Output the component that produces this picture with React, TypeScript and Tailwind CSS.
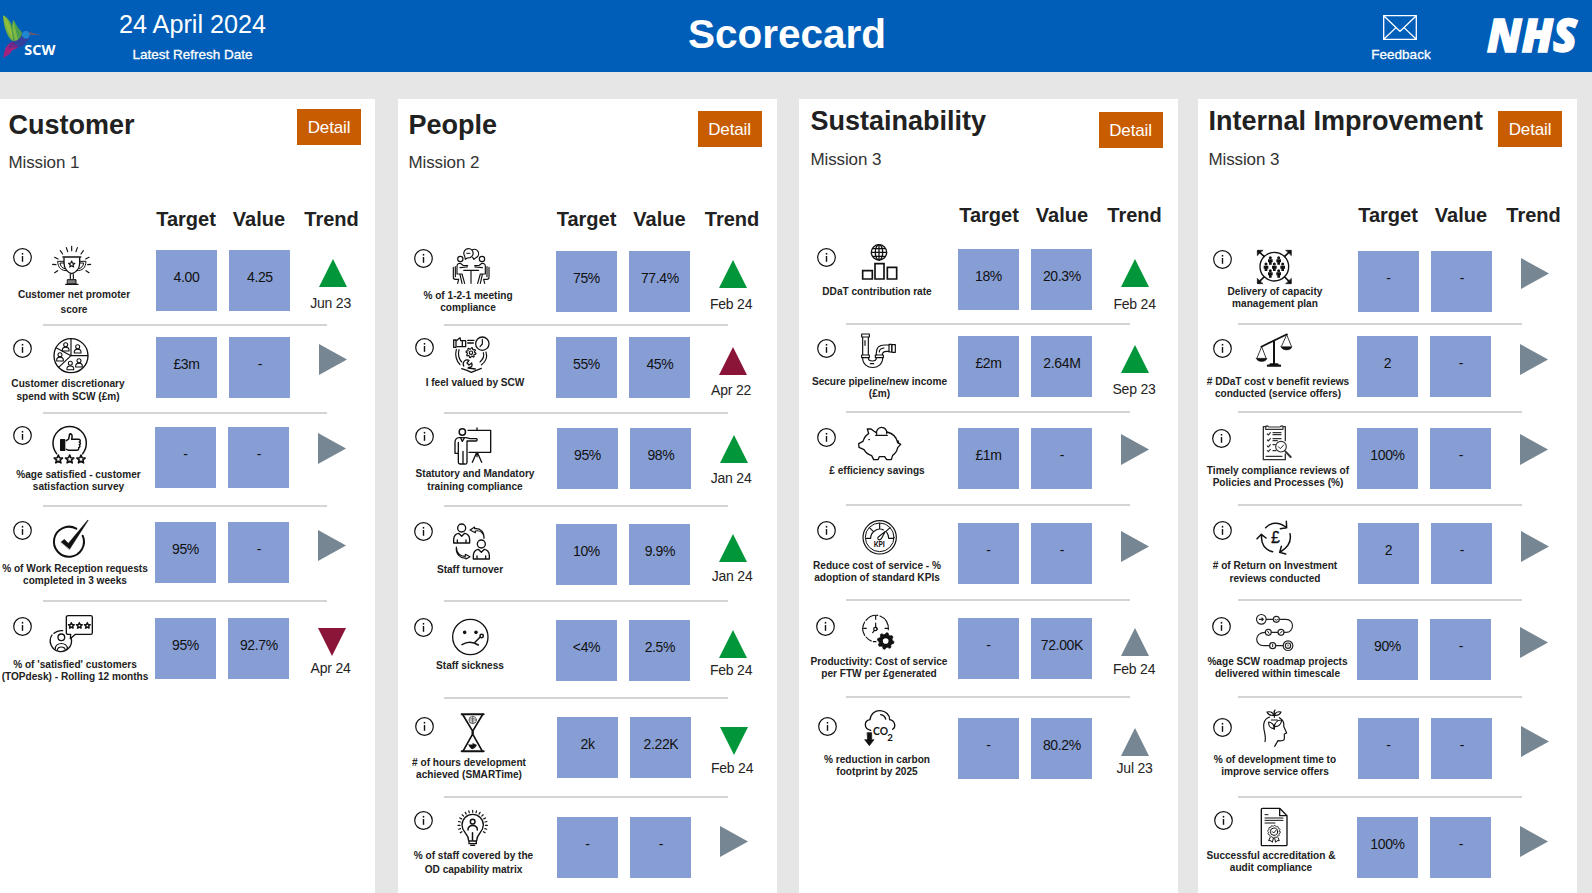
import React from "react";

type Tone = "green" | "red" | "grey";
type Dir = "up" | "down" | "right";

const toneClass: Record<Tone, string> = {
  green: "fill-[#009639]",
  red: "fill-[#8a1538]",
  grey: "fill-[#768692]",
};

/* ---------- drawing helpers ---------- */

function starPoints(x: number, y: number, r: number) {
  return Array.from({ length: 10 }, (_, i) => {
    const a = (Math.PI / 5) * i - Math.PI / 2;
    const q = i % 2 ? r * 0.45 : r;
    return `${(x + q * Math.cos(a)).toFixed(1)},${(y + q * Math.sin(a)).toFixed(1)}`;
  }).join(" ");
}

const Star = ({ x, y, r, w = 4 }: { x: number; y: number; r: number; w?: number }) => (
  <polygon points={starPoints(x, y, r)} strokeWidth={w} />
);

function gearPath(x: number, y: number, r: number, teeth: number, depth: number) {
  const n = teeth * 4;
  return (
    Array.from({ length: n }, (_, i) => {
      const a = ((Math.PI * 2) / n) * (i + 0.5);
      const q = i % 4 < 2 ? r : r - depth;
      return `${i ? "L" : "M"}${(x + q * Math.cos(a)).toFixed(1)} ${(y + q * Math.sin(a)).toFixed(1)}`;
    }).join("") + "Z"
  );
}

function rayPath(x: number, y: number, r1: number, r2: number, from: number, to: number, n: number) {
  return Array.from({ length: n }, (_, i) => {
    const a = ((from + ((to - from) * i) / (n - 1)) * Math.PI) / 180;
    const c = Math.cos(a);
    const s = Math.sin(a);
    return `M${(x + r1 * c).toFixed(1)} ${(y + r1 * s).toFixed(1)}L${(x + r2 * c).toFixed(1)} ${(y + r2 * s).toFixed(1)}`;
  }).join("");
}

const Bust = ({ x, y }: { x: number; y: number }) => (
  <g strokeWidth="3.2">
    <circle cx={x} cy={y - 8} r="6" />
    <path d={`M${x - 10} ${y + 11}V${y + 6}Q${x - 9} ${y} ${x} ${y}Q${x + 9} ${y} ${x + 10} ${y + 6}V${y + 11}Z`} />
  </g>
);

const Art = ({ box, at, children }: { box: string; at: string; children: React.ReactNode }) => (
  <svg
    viewBox={box}
    className={`h-[42px] w-11 shrink-0 overflow-visible ${at}`}
    fill="none"
    stroke="#111"
    strokeWidth="4"
    strokeLinecap="round"
    strokeLinejoin="round"
  >
    {children}
  </svg>
);

const InfoIcon = ({ at }: { at: string }) => (
  <svg viewBox="0 0 19 19" className={`h-[19px] w-[19px] ${at}`} fill="none" stroke="#111">
    <circle cx="9.5" cy="9.5" r="8.8" strokeWidth="1.2" />
    <path d="M9.5 8V13.8" strokeWidth="1.4" />
    <path d="M9.5 4.9V6.6" strokeWidth="1.5" />
  </svg>
);

/* ---------- pictograms ---------- */

const Trophy = ({ at }: { at: string }) => (
  <Art box="147 42 132 126" at={at}>
    <path d="M215 49V62M199 53L203 65M232 53L228 65M181 62L188 72M250 62L243 72M164 82L174 87M267 82L257 87M158 103L168 104M263 104L272 103M164 128L173 122M267 128L258 122" strokeWidth="3.5" />
    <path d="M192 84V100C192 118 205 128 215 131C226 128 239 118 239 100V84" />
    <path d="M189 81H242" strokeWidth="5" />
    <path d="M191 94H173C174 114 184 122 200 122M240 94H258C257 114 247 122 231 122M192 99H180C181 108 186 114 194 116M239 99H251C250 108 245 114 237 116" strokeWidth="3" />
    <Star x={215} y={103} r={10} w={3.5} />
    <path d="M211 132V146M220 132V146" strokeWidth="3.5" />
    <path d="M203 149H228V162H203Z" fill="#111" fillOpacity=".55" strokeWidth="3" />
    <path d="M197 163H234" strokeWidth="4" />
  </Art>
);

const PeoplePie = ({ at }: { at: string }) => (
  <Art box="147 312 132 126" at={at}>
    <circle cx="213" cy="377" r="51" />
    <path d="M213 327V377H263M213 377L176 412M213 377L168 353" strokeWidth="3.5" />
    <Bust x={197} y={352} />
    <Bust x={233} y={358} />
    <Bust x={180} y={382} />
    <Bust x={237} y={400} />
    <Bust x={211} y={408} />
  </Art>
);

const ThumbStars = ({ at }: { at: string }) => (
  <Art box="147 582 132 126" at={at}>
    <path d="M170 671A50 50 0 1 1 248 671" strokeWidth="4.5" />
    <rect x="182" y="629" width="12" height="32" fill="#111" />
    <path d="M199 632L206 627L209 612C216 610 218 616 215 628H236C242 628 242 635 238 636C242 638 242 643 238 644C241 647 240 652 236 653C238 657 234 661 230 661H206L199 658" strokeWidth="4.5" />
    <Star x={175} y={688} r={13} w={5} />
    <Star x={209} y={688} r={13} w={5} />
    <Star x={243} y={688} r={13} w={5} />
  </Art>
);

const CheckRing = ({ at }: { at: string }) => (
  <Art box="147 174 132 126" at={at}>
    <path d="M229 206A45 45 0 1 0 248 227" strokeWidth="6" />
    <path d="M183 246L193 238L205 250L263 180L265 181L209 268Z" fill="#111" strokeWidth="1" />
  </Art>
);

const ReviewUser = ({ at }: { at: string }) => (
  <Art box="147 459 132 126" at={at}>
    <path d="M205 467H272Q277 467 277 472V518Q277 523 272 523H226L211 536L212 523H205Q199 523 199 518V472Q199 467 205 467Z" />
    <Star x={214} y={497} r={9} w={4.5} />
    <Star x={238} y={497} r={9} w={4.5} />
    <Star x={262} y={497} r={9} w={4.5} />
    <path d="M188 512A32 32 0 0 0 162 520M156 525A32 32 0 1 0 214 536" />
    <circle cx="184" cy="532" r="10" />
    <path d="M166 567C164 545 204 545 202 567M172 570C174 558 194 558 196 570" strokeWidth="3.5" />
  </Art>
);

const MeetingSide = () => (
  <g strokeWidth="3.5">
    <circle cx="193" cy="87" r="8" />
    <path d="M183 132V108Q184 99 193 100L201 106L215 107M192 113L214 111M183 132H198L206 160M172 112V142Q172 148 178 148H188M192 134L198 160M188 148L185 160M178 110V140" />
  </g>
);

const Meeting = ({ at }: { at: string }) => (
  <Art box="162 48 132 126" at={at}>
    <path d="M206 78A14 14 0 1 1 222 83L214 84L208 88Z" strokeWidth="3.5" />
    <path d="M229 59A13 13 0 1 1 240 83L234 88L230 82" strokeWidth="3.5" />
    <path d="M212 70H222" strokeWidth="3" />
    <MeetingSide />
    <g transform="translate(451 0) scale(-1 1)">
      <MeetingSide />
    </g>
    <path d="M203 121H248M225 121V160" strokeWidth="3.5" />
  </Art>
);

const ValuedCycle = ({ at }: { at: string }) => (
  <Art box="162 312 132 126" at={at}>
    <path d="M173 330H180V352H173ZM180 333L192 323L194 332H209V350H184M199 332V350M215 331H234M215 339H232" strokeWidth="3.8" />
    <circle cx="259" cy="341" r="20" strokeWidth="3.8" />
    <path d="M259 328V342L252 350" strokeWidth="3.5" />
    <path d={gearPath(225, 368, 15, 8, 4)} strokeWidth="3.5" />
    <circle cx="225" cy="368" r="5" strokeWidth="3.5" />
    <path d="M181 358C176 378 182 393 192 404M189 359C185 375 189 387 197 396M270 366C275 382 268 396 256 405M262 368C266 380 261 388 252 396" strokeWidth="3.5" />
    <path d="M203 408C198 396 208 387 219 391L213 399L219 405L227 399C231 408 226 413 218 412M197 416L213 421L226 427L256 415M216 414L238 417" strokeWidth="3.8" />
  </Art>
);

const Presenter = ({ at }: { at: string }) => (
  <Art box="162 585 132 126" at={at}>
    <circle cx="199" cy="606" r="9.5" strokeWidth="4.5" />
    <path d="M216 601H284V667H219M243 594V600M243 668V680M241 670L229 697M245 670L257 697" />
    <path d="M189 623H210L222 626H241Q246 629 241 633H213V698Q212 703 206 702H201V664M200 702H192Q187 702 187 697V670M187 637V670H177V636Q178 624 189 623M194 624L199 634L205 624" />
  </Art>
);

const TurnoverPerson = ({ x, y }: { x: number; y: number }) => (
  <g transform={`translate(${x} ${y})`}>
    <circle cx="0" cy="0" r="12" />
    <path d="M-24 45V34Q-23 18 -9 16L0 25L9 16Q23 18 24 34V45ZM-13 45V36M13 45V36" />
  </g>
);

const Turnover = ({ at }: { at: string }) => (
  <Art box="162 183 132 126" at={at}>
    <TurnoverPerson x={197} y={204} />
    <TurnoverPerson x={256} y={252} />
    <path d="M264 235C264 218 252 210 238 213V218L222 210L236 201V206C254 204 265 216 264 235Z" strokeWidth="3.5" />
    <path d="M181 261C181 280 194 290 208 289V283L222 290L210 297V294C192 296 179 282 181 261Z" strokeWidth="3.5" />
  </Art>
);

const SickFace = ({ at }: { at: string }) => (
  <Art box="162 468 132 126" at={at}>
    <circle cx="223" cy="531" r="53" />
    <circle cx="206" cy="517" r="3.5" fill="#111" />
    <circle cx="240" cy="517" r="3.5" fill="#111" />
    <path d="M198 554Q222 539 247 555M237 547L252 532" strokeWidth="4.5" />
    <circle cx="257" cy="528" r="5" strokeWidth="4.5" />
  </Art>
);

const Hourglass = ({ at }: { at: string }) => (
  <Art box="162 63 132 126" at={at}>
    <path d="M197 73H263M197 184H263" strokeWidth="6" />
    <path d="M201 75L229 122V134L202 182M259 75L231 122V134L258 182" strokeWidth="5" />
    <g strokeWidth="2.2" stroke="#444">
      <circle cx="230" cy="90" r="11" />
      <path d="M219 90H241M230 79V101M222 84Q230 88 238 84M222 97Q230 93 238 97" />
    </g>
    <path d="M218 164H230V160L242 165L238 172L230 177Q222 176 218 164Z" fill="#111" strokeWidth="1" />
  </Art>
);

const StaffBulb = ({ at }: { at: string }) => (
  <Art box="162 354 132 126" at={at}>
    <path d="M218 452C218 430 198 428 198 405A32 32 0 0 1 262 405C262 428 242 430 242 452" />
    <path d="M219 453H241V461H219ZM224 466H236" />
    <circle cx="230" cy="395" r="7" strokeWidth="4.5" />
    <path d="M216 420C214 402 246 402 244 420M229.500 428V450" strokeWidth="4.5" />
    <path d={rayPath(230, 405, 38, 44, -212, 32, 17)} strokeWidth="3.5" />
  </Art>
);

const GlobeBars = ({ at }: { at: string }) => (
  <Art box="183 36 132 126" at={at}>
    <circle cx="249" cy="67" r="23" />
    <ellipse cx="249" cy="67" rx="11" ry="23" />
    <path d="M249 44V90M227 67H271M231 56H267M231 79H267" />
    <path d="M200 122H229V147H200ZM237 101H264V147H237ZM274 112H302V147H274Z" strokeWidth="5" strokeLinejoin="miter" />
  </Art>
);

const Pipe = ({ at }: { at: string }) => (
  <Art box="183 303 132 126" at={at}>
    <g strokeWidth="3.5">
      <path d="M197 312H220V321H197ZM200 321V374M217 321V374M197 375H220V383H197ZM200 384C200 422 260 422 260 384M217 384C217 396 241 396 241 384M238 375H262V383H238Z" />
      <path d="M241 375V368C241 352 252 345 266 345H280M259 374C259 366 264 364 272 364H280M279 343H287V366H279ZM288 344H298V367H288Z" />
      <path d="M207 332V346M250 366C250 360 256 355 264 354M223 401H233" />
    </g>
  </Art>
);

const PiggyBank = ({ at }: { at: string }) => (
  <Art box="183 582 132 126" at={at}>
    <path d="M241 608L233 603L225 597H214L218 611C208 617 204 624 201 634L188 641L189 652L204 659C209 668 217 674 227 677L233 689H246L250 680H266L272 689H286L290 676C298 671 303 664 305 653L314 643L305 638C302 622 290 610 273 606" />
    <path d="M239 616H274M242 612A15.500 15.500 0 1 1 272 611" />
    <circle cx="219" cy="629" r="1.500" strokeWidth="2" />
    <path d="M306 632L308 640" />
  </Art>
);

const KpiDial = ({ at }: { at: string }) => (
  <Art box="183 174 132 126" at={at}>
    <circle cx="251" cy="232" r="50" strokeWidth="3.500" />
    <circle cx="251" cy="232" r="43" strokeWidth="3" />
    <path d="M251 190V206M209 235H224M293 235H278M220 203L232 214M282 203L270 214M224 235C224 223 230 216 239 211C246 207 256 206 262 210M278 235C278 228 276 222 272 217M247 231L268 214L256 236Q250 243 246 237Q244 233 247 231Z" strokeWidth="3.500" />
    <text x="250" y="262" textAnchor="middle" textLength="33" lengthAdjust="spacingAndGlyphs" fontSize="20" fontWeight="900" fontFamily="Lato, sans-serif" fill="#111" stroke="none">KPI</text>
  </Art>
);

const ClockGear = ({ at }: { at: string }) => (
  <Art box="183 456 132 126" at={at}>
    <path d="M277 509A39 39 0 0 0 252 468M245 466A39 39 0 0 0 210 481M206 486A39 39 0 0 0 206 526M210 531A39 39 0 0 0 226 543M232 545H240" strokeWidth="3.500" />
    <path d="M239 468V478M203 505H211M267 505H276M239 489V501M235 512L230 518M241 502L244 508" strokeWidth="3.500" />
    <circle cx="238" cy="507" r="5" strokeWidth="3.500" />
    <path d={gearPath(269, 543, 25, 8, 5)} fill="#111" strokeWidth="2" />
    <circle cx="269" cy="543" r="8.500" fill="#fff" stroke="none" />
  </Art>
);

const CarbonCloud = ({ at }: { at: string }) => (
  <Art box="183 741 132 126" at={at}>
    <path d="M224 811C202 805 204 782 222 779C224 760 238 751 253 752C270 753 281 765 281 779C297 782 301 800 290 808M254 764Q266 766 269 777" />
    <path d="M214 818H227V839H234L220 857L206 839H214Z" fill="#111" strokeWidth="2" />
    <text x="231" y="825" textLength="45" lengthAdjust="spacingAndGlyphs" fontSize="34" fontWeight="700" fontFamily="Lato, sans-serif" fill="#111" stroke="none">CO</text>
    <text x="274" y="842" fontSize="29" fontWeight="700" fontFamily="Lato, sans-serif" fill="#111" stroke="none">2</text>
  </Art>
);

const crowd = [[235, 88], [260, 88], [222, 107], [247, 107], [272, 107], [235, 127], [260, 127]];

const Capacity = ({ at }: { at: string }) => (
  <Art box="180 48 132 126" at={at}>
    <circle cx="247" cy="110" r="43" />
    <path d="M216 79L199 63M278 79L295 63M216 141L199 158M278 141L295 158" strokeWidth="5" />
    <path d="M196 76V61H212ZM298 76V61H282ZM196 146V161H212ZM298 146V161H282Z" fill="#111" strokeWidth="2" />
    {crowd.map(([x, y]) => (
      <g key={`${x}-${y}`} fill="#111" stroke="none">
        <circle cx={x} cy={y - 5} r="4.500" />
        <path d={`M${x - 7} ${y}H${x + 7}V${y + 9}H${x + 4}V${y + 16}H${x - 4}V${y + 9}H${x - 7}Z`} />
      </g>
    ))}
  </Art>
);

const Scales = ({ at }: { at: string }) => (
  <Art box="180 303 132 126" at={at}>
    <path d="M208 350L285 313" strokeWidth="5" />
    <path d="M246 334V402" strokeWidth="6" />
    <path d="M228 407H264M236 403H256" strokeWidth="7" />
    <path d="M209 350L195 384M209 350L222 384M284 314L269 348M284 314L298 348" strokeWidth="2.500" />
    <path d="M193 385H225C222 398 196 398 193 385ZM267 350H300C297 363 270 363 267 350Z" fill="#111" strokeWidth="1.500" />
  </Art>
);

const AuditClipboard = ({ at }: { at: string }) => (
  <Art box="180 582 132 126" at={at}>
    <g stroke="#333">
      <path d="M223 590H214V689H280V672M280 632V590H271" />
      <path d="M221 589V598H273V589Q268 586 264 591H230Q226 586 221 589Z" strokeWidth="3.500" />
      <path d="M226 612L229 615L235 608M226 630L229 633L235 626M226 648L229 651L235 644M226 662L229 665L235 658M243 608H267M243 614H267M243 626H267M243 632H256M243 644H250M243 662H252M222 679H270" strokeWidth="3.500" />
      <circle cx="267" cy="650" r="16" fill="#fff" strokeWidth="3.500" />
      <path d="M259 650L265 656L275 645" strokeWidth="3" />
      <path d="M280 664L296 681" strokeWidth="6" />
    </g>
  </Art>
);

const ReturnCycle = ({ at }: { at: string }) => (
  <Art box="180 174 132 126" at={at}>
    <path d="M221 203C238 186 262 186 281 201M283 184L284 203L265 206M294 221C299 244 288 262 265 276M268 259L263 277L281 282M242 275C218 270 206 250 209 225M195 236L208 223L222 234" strokeWidth="4.500" />
    <text x="250" y="249" textAnchor="middle" fontSize="48" fontFamily="Liberation Sans, Arial, sans-serif" fill="#111" strokeWidth="1">£</text>
  </Art>
);

const Roadmap = ({ at }: { at: string }) => (
  <Art box="180 456 132 126" at={at}>
    <g stroke="#222" strokeWidth="3.500">
      <circle cx="208" cy="478" r="14.500" />
      <path d="M202 478H213M210 474L214 478L210 482" />
      <path d="M223 478H244M262 478H282C308 478 308 517 282 517H276M258 517H238M220 517C186 517 186 557 216 557H233M251 557H273" />
      <circle cx="253" cy="478" r="9" />
      <circle cx="267" cy="517" r="9" />
      <circle cx="229" cy="517" r="9" />
      <circle cx="242" cy="557" r="9" />
      <circle cx="288" cy="557" r="14.500" />
      <circle cx="288" cy="557" r="8" />
      <path d="M249 479Q253 483 257 479M264 520L270 514M227 514L231 520M242 553V560M288 555V558" strokeWidth="3" />
    </g>
  </Art>
);

const GrowthMind = ({ at }: { at: string }) => (
  <Art box="180 51 132 126" at={at}>
    <path d="M219 155C224 132 211 120 216 99C218 90 224 84 233 81M262 83C273 89 277 98 275 109L284 129L277 132V146Q277 154 258 152L248 169" strokeWidth="3.500" />
    <path d="M247 64V82M247 118V104" strokeWidth="3.500" />
    <path d="M246 76C236 77 228 73 225 66C235 64 243 67 246 76ZM248 76C257 77 264 73 267 66C258 64 250 67 248 76ZM246 66L249 60M246 116C236 115 229 107 230 96C241 98 247 105 246 116ZM247 110C249 97 258 89 269 90C268 103 259 111 247 110ZM238 90H256" strokeWidth="3.500" />
  </Art>
);

const Certificate = ({ at }: { at: string }) => (
  <Art box="180 348 132 126" at={at}>
    <path d="M211 355H263L285 377V464Q285 467 282 467H211Q208 467 208 464V358Q208 355 211 355ZM263 356V377H284" />
    <path d="M219 374H228M219 384H273M219 391H273M219 399H249" strokeWidth="3" />
    <path d={gearPath(246, 425, 19, 12, 2.5)} strokeWidth="2.500" />
    <circle cx="246" cy="425" r="11" strokeWidth="3" />
    <path d="M241 425L245 429L252 421M234 443L230 452L237 452L241 457L244 445M258 443L262 452L255 452L251 457L248 445" strokeWidth="3" />
  </Art>
);

/* ---------- scorecard pieces ---------- */

const Triangle = ({ dir, tone }: { dir: Dir; tone: Tone }) =>
  dir === "right" ? (
    <svg viewBox="0 0 28 31" className={`h-[31px] w-7 shrink-0 ${toneClass[tone]}`}>
      <path d="M0 0L28 15.500L0 31Z" />
    </svg>
  ) : (
    <svg viewBox="0 0 28 28" className={`h-7 w-7 shrink-0 ${toneClass[tone]}`}>
      <path d={dir === "up" ? "M14 0L28 28H0Z" : "M0 0H28L14 28Z"} />
    </svg>
  );

const Tile = ({ children }: { children: string }) => (
  <div className="flex h-[61px] w-[61px] items-center justify-center bg-[#879ed4] pb-[7px] text-[14px] leading-4 tracking-[-0.35px] text-[#111]">
    {children}
  </div>
);

interface RowProps {
  size: string;
  left: string;
  gutter: string;
  info: string;
  head: string;
  art: React.ReactNode;
  label: string;
  lines: string[];
  tiles: string;
  target: string;
  value: string;
  dir?: Dir;
  tone?: Tone;
  trend: string;
  date?: string;
  dateAt?: string;
}

const Row = ({ size, left, gutter, info, head, art, label, lines, tiles, target, value, dir = "right", tone = "grey", trend, date, dateAt = "" }: RowProps) => (
  <div className={`flex items-start ${size}`}>
    <div className={`shrink-0 ${left}`}>
      <div className={`flex items-start ${head}`}>
        <div className={`shrink-0 ${gutter}`}>
          <InfoIcon at={info} />
        </div>
        {art}
      </div>
      <p className={`w-[150px] pt-[0.6px] text-center text-[10.1px] font-bold whitespace-nowrap text-[#222] ${label}`}>
        {lines.map((l) => (
          <span key={l} className="block">{l}</span>
        ))}
      </p>
    </div>
    <div className={`flex shrink-0 gap-[12.4px] ${tiles}`}>
      <Tile>{target}</Tile>
      <Tile>{value}</Tile>
    </div>
    <div className={`ml-[28.2px] flex w-7 shrink-0 flex-col items-center ${trend}`}>
      <Triangle dir={dir} tone={tone} />
      {date && <span className={`pt-px text-[14px] leading-4 tracking-[-0.2px] whitespace-nowrap text-[#252423] ${dateAt}`}>{date}</span>}
    </div>
  </div>
);

const Rule = ({ at }: { at: string }) => <div className={`h-[2px] w-[284px] bg-[#d4d4d4] ${at}`} />;

interface PanelProps {
  title: string;
  mission: string;
  width: string;
  pad: string;
  titleAt: string;
  missionAt: string;
  button: string;
  heads: string;
  rule: string;
  gutter: string;
  rows: Omit<RowProps, "gutter">[];
}

const Panel = ({ title, mission, width, pad, titleAt, missionAt, button, heads, rule, gutter, rows }: PanelProps) => (
  <section className={`h-[794px] shrink-0 overflow-hidden bg-white ${width}`}>
    <div className="h-[133px]">
      <div className={`flex h-[102px] items-start justify-between ${pad}`}>
        <div>
          <h2 className={`text-[27px] leading-8 font-bold whitespace-nowrap text-[#212121] ${titleAt}`}>{title}</h2>
          <p className={`text-[17px] leading-5 tracking-[-0.12px] text-[#333] ${missionAt}`}>{mission}</p>
        </div>
        <button className={`h-9 w-16 shrink-0 bg-[#c85c00] pt-px text-[17px] tracking-[-0.15px] text-white ${button}`}>Detail</button>
      </div>
      <div className={`flex gap-3 text-[20px] leading-6 font-bold text-[#212121] ${heads}`}>
        <span className="flex w-[61px] justify-center">Target</span>
        <span className="flex w-[61px] justify-center">Value</span>
        <span className="ml-4 flex w-7 justify-center">Trend</span>
      </div>
    </div>
    {rows.map((r, i) => (
      <React.Fragment key={r.lines[0]}>
        {i > 0 && <Rule at={rule} />}
        <Row gutter={gutter} {...r} />
      </React.Fragment>
    ))}
  </section>
);

const panels: PanelProps[] = [
  {
    title: "Customer", mission: "Mission 1", width: "w-[375px]", pad: "pl-[8.500px] pr-[14px]",
    titleAt: "mt-[9.500px]", missionAt: "mt-[12px]", button: "mt-[10px]", heads: "pl-[155.500px] pt-[6px]",
    rule: "ml-[42.500px]", gutter: "w-[49px]",
    rows: [
      { size: "h-[92px]", left: "w-[156px]", info: "mt-4 ml-[13px]", head: "h-[54px]", art: <Trophy at="mt-3" />, label: "-ml-px leading-[15px]", lines: ["Customer net promoter", "score"], tiles: "mt-[18px]", target: "4.00", value: "4.25", dir: "up", tone: "green", trend: "mt-[26.700px]", date: "Jun 23", dateAt: "mt-[7px] mr-[4px]" },
      { size: "h-[86px]", left: "w-[156px]", info: "mt-[12.500px] ml-[13px]", head: "h-[50px]", art: <PeoplePie at="mt-2" />, label: "-ml-[7px] leading-[13.500px]", lines: ["Customer discretionary", "spend with SCW (£m)"], tiles: "mt-[11px]", target: "£3m", value: "-", trend: "mt-[17.700px]" },
      { size: "h-[91px]", left: "w-[155px]", info: "mt-3 ml-[12.500px]", head: "h-[54px]", art: <ThumbStars at="mt-[10px]" />, label: "ml-[3.500px] leading-[12.500px]", lines: ["%age satisfied - customer", "satisfaction survey"], tiles: "mt-[13px]", target: "-", value: "-", trend: "mt-[18.700px]" },
      { size: "h-[93px]", left: "w-[155px]", info: "mt-[14px] ml-[13px]", head: "h-[55px]", art: <CheckRing at="mt-[11px]" />, label: "ml-0 leading-[12.700px]", lines: ["% of Work Reception requests", "completed in 3 weeks"], tiles: "mt-[15px]", target: "95%", value: "-", trend: "mt-[22.700px]" },
      { size: "h-[95px]", left: "w-[155px]", info: "mt-[15px] ml-[13px]", head: "h-[56px]", art: <ReviewUser at="mt-[11px]" />, label: "ml-0 leading-[12.700px]", lines: ["% of 'satisfied' customers", "(TOPdesk) - Rolling 12 months"], tiles: "mt-4", target: "95%", value: "92.7%", dir: "down", tone: "red", trend: "mt-[25.700px]", date: "Apr 24", dateAt: "mt-[3.500px] mr-[2px]" },
    ],
  },
  {
    title: "People", mission: "Mission 2", width: "ml-[23px] w-[379px]", pad: "pl-[10.500px] pr-[15.500px]",
    titleAt: "mt-[9.500px]", missionAt: "mt-[12px]", button: "mt-[12px]", heads: "pl-[158px] pt-[6px]",
    rule: "ml-[46px]", gutter: "w-[52px]",
    rows: [
      { size: "h-[92px]", left: "w-[158px]", info: "mt-[17px] ml-[16px]", head: "h-[57px]", art: <Meeting at="mt-[14px]" />, label: "-ml-[5px] leading-[12.700px]", lines: ["% of 1-2-1 meeting", "compliance"], tiles: "mt-[19px]", target: "75%", value: "77.4%", dir: "up", tone: "green", trend: "mt-7", date: "Feb 24", dateAt: "mt-[7px] mr-[3px]" },
      { size: "h-[86px]", left: "w-[158px]", info: "mt-3 ml-[17px]", head: "h-[50px]", art: <ValuedCycle at="mt-2" />, label: "ml-[2px] leading-[12.700px]", lines: ["I feel valued by SCW"], tiles: "mt-[11px]", target: "55%", value: "45%", dir: "up", tone: "red", trend: "mt-[20.700px]", date: "Apr 22", dateAt: "mt-[6px] mr-[3px]" },
      { size: "h-[91px]", left: "w-[159px]", info: "mt-[13px] ml-[17px]", head: "h-[52px]", art: <Presenter at="mt-[11px]" />, label: "ml-[2px] leading-[13.600px]", lines: ["Statutory and Mandatory", "training compliance"], tiles: "mt-[14px]", target: "95%", value: "98%", dir: "up", tone: "green", trend: "mt-[21.300px]", date: "Jan 24", dateAt: "mt-[6px] mr-[5px]" },
      { size: "h-[93px]", left: "w-[158px]", info: "mt-[15px] ml-[16px]", head: "h-[56px]", art: <Turnover at="mt-[14px]" />, label: "-ml-[3px] leading-[12.700px]", lines: ["Staff turnover"], tiles: "mt-[17px]", target: "10%", value: "9.9%", dir: "up", tone: "green", trend: "mt-[27px]", date: "Jan 24", dateAt: "mt-[5px] mr-px" },
      { size: "h-[95px]", left: "w-[158px]", info: "mt-4 ml-[16px]", head: "h-[57px]", art: <SickFace at="mt-[14px]" />, label: "-ml-[3px] leading-[12.700px]", lines: ["Staff sickness"], tiles: "mt-[18px]", target: "<4%", value: "2.5%", dir: "up", tone: "green", trend: "mt-7", date: "Feb 24", dateAt: "mt-[3px] mr-[3px]" },
      { size: "h-[97px]", left: "w-[159px]", info: "mt-[18px] ml-[17px]", head: "h-[57px]", art: <Hourglass at="mt-3" />, label: "-ml-[4px] leading-[12.700px]", lines: ["# of hours development", "achieved (SMARTime)"], tiles: "mt-[18px]", target: "2k", value: "2.22K", dir: "down", tone: "green", trend: "mt-7", date: "Feb 24", dateAt: "mt-[4px] mr-[3px]" },
      { size: "h-[94px]", left: "w-[159px]", info: "mt-[13px] ml-[15.500px]", head: "h-[50.500px]", art: <StaffBulb at="mt-[10px]" />, label: "ml-[0.500px] leading-[13.600px]", lines: ["% of staff covered by the", "OD capability matrix"], tiles: "mt-[19px]", target: "-", value: "-", trend: "mt-[27.700px]" },
    ],
  },
  {
    title: "Sustainability", mission: "Mission 3", width: "ml-[22px] w-[379px]", pad: "pl-[11.500px] pr-[15.500px]",
    titleAt: "mt-[6px]", missionAt: "mt-[12.500px]", button: "mt-[13px]", heads: "pl-[159.500px] pt-[2px]",
    rule: "ml-[46.500px]", gutter: "w-[58px]",
    rows: [
      { size: "h-[91px]", left: "w-[159px]", info: "mt-4 ml-[18px]", head: "h-[53px]", art: <GlobeBars at="mt-[10px]" />, label: "ml-[3px] leading-[12.700px]", lines: ["DDaT contribution rate"], tiles: "mt-[17px]", target: "18%", value: "20.3%", dir: "up", tone: "green", trend: "mt-[26.700px]", date: "Feb 24", dateAt: "mt-[8px]" },
      { size: "h-[86px]", left: "w-[159px]", info: "mt-[13.500px] ml-[18px]", head: "h-[50.500px]", art: <Pipe at="mt-[6px]" />, label: "ml-[5.500px] leading-[11.700px]", lines: ["Secure pipeline/new income", "(£m)"], tiles: "mt-[11px]", target: "£2m", value: "2.64M", dir: "up", tone: "green", trend: "mt-5", date: "Sep 23", dateAt: "mt-[7px] mr-px" },
      { size: "h-[91px]", left: "w-[159px]", info: "mt-[14.500px] ml-[18px]", head: "h-[51px]", art: <PiggyBank at="mt-[11px]" />, label: "ml-[3px] leading-[12.700px]", lines: ["£ efficiency savings"], tiles: "mt-[15px]", target: "£1m", value: "-", trend: "mt-[21px]" },
      { size: "h-[93px]", left: "w-[159px]", info: "mt-[15px] ml-[18px]", head: "h-[53px]", art: <KpiDial at="mt-3" />, label: "ml-[3px] leading-[12.700px]", lines: ["Reduce cost of service - %", "adoption of standard KPIs"], tiles: "mt-[17px]", target: "-", value: "-", trend: "mt-[24.700px]" },
      { size: "h-[95px]", left: "w-[159px]", info: "mt-[15.500px] ml-[17px]", head: "h-[54px]", art: <ClockGear at="mt-[11px]" />, label: "ml-[5px] leading-[12.500px]", lines: ["Productivity: Cost of service", "per FTW per £generated"], tiles: "mt-[17px]", target: "-", value: "72.00K", dir: "up", tone: "grey", trend: "mt-[27.300px]", date: "Feb 24", dateAt: "mt-[4px] mr-px" },
      { size: "h-[98px]", left: "w-[159px]", info: "mt-[19px] ml-[18.500px]", head: "h-[55px]", art: <CarbonCloud at="mt-[9px]" />, label: "ml-[3px] leading-[12.700px]", lines: ["% reduction in carbon", "footprint by 2025"], tiles: "mt-5", target: "-", value: "80.2%", dir: "up", tone: "grey", trend: "mt-[29.700px]", date: "Jul 23", dateAt: "mt-[3px]" },
    ],
  },
  {
    title: "Internal Improvement", mission: "Mission 3", width: "ml-[20px] w-[379px]", pad: "pl-[10.500px] pr-[15px]",
    titleAt: "mt-[6px]", missionAt: "mt-[12.500px]", button: "mt-[12px]", heads: "pl-[159.500px] pt-[2px]",
    rule: "ml-[39.500px]", gutter: "w-[54px]",
    rows: [
      { size: "h-[91px]", left: "w-[160px]", info: "mt-[17.500px] ml-[14.500px]", head: "h-[53px]", art: <Capacity at="mt-[14px]" />, label: "ml-[2px] leading-[12.300px]", lines: ["Delivery of capacity", "management plan"], tiles: "mt-[19px]", target: "-", value: "-", trend: "mt-[26px]" },
      { size: "h-[86px]", left: "w-[159px]", info: "mt-[13.500px] ml-[14.500px]", head: "h-[50.500px]", art: <Scales at="mt-[6px]" />, label: "ml-[5px] leading-[11.700px]", lines: ["# DDaT cost v benefit reviews", "conducted (service offers)"], tiles: "mt-[11px]", target: "2", value: "-", trend: "mt-[19px]" },
      { size: "h-[91px]", left: "w-[159px]", info: "mt-4 ml-[13.500px]", head: "h-[51.500px]", art: <AuditClipboard at="mt-[11px]" />, label: "ml-[5px] leading-[11.700px]", lines: ["Timely compliance reviews of", "Policies and Processes (%)"], tiles: "mt-[15px]", target: "100%", value: "-", trend: "mt-[21px]" },
      { size: "h-[93px]", left: "w-[160px]", info: "mt-[15px] ml-[14.500px]", head: "h-[52px]", art: <ReturnCycle at="mt-3" />, label: "ml-[2px] leading-[13.600px]", lines: ["# of Return on Investment", "reviews conducted"], tiles: "mt-[17px]", target: "2", value: "-", trend: "mt-[25px]" },
      { size: "h-[95px]", left: "w-[159px]", info: "mt-4 ml-[13.500px]", head: "h-[54px]", art: <Roadmap at="mt-[11px]" />, label: "ml-[4.500px] leading-[12.500px]", lines: ["%age SCW roadmap projects", "delivered within timescale"], tiles: "mt-[18px]", target: "90%", value: "-", trend: "mt-[26px]" },
      { size: "h-[98px]", left: "w-[160px]", info: "mt-[19.500px] ml-[14.500px]", head: "h-[55px]", art: <GrowthMind at="mt-[9px]" />, label: "ml-[2px] leading-[12.500px]", lines: ["% of development time to", "improve service offers"], tiles: "mt-5", target: "-", value: "-", trend: "mt-7" },
      { size: "h-[94px]", left: "w-[159px]", info: "mt-[13px] ml-[15.500px]", head: "h-[51px]", art: <Certificate at="mt-2" />, label: "-ml-[2px] leading-[12.700px]", lines: ["Successful accreditation &", "audit compliance"], tiles: "mt-[19px]", target: "100%", value: "-", trend: "mt-[27.700px]" },
    ],
  },
];

const ScwLogo = () => (
  <svg viewBox="0 40 174 141" className="mt-[13px] h-[47px] w-[58px] shrink-0">
    <path d="M9 47C20 52 30 62 35 78L40 126C24 116 11 88 9 47Z" fill="#6fae45" />
    <path d="M9 47C24 60 32 80 42 124C28 108 16 80 9 47Z" fill="#93bf3c" />
    <path d="M40 60C46 68 50 78 54 84L66 98L64 124L40 126L34 80Z" fill="#4a9c4e" />
    <path d="M40 60C44 80 50 100 54 124L46 126L38 90Z" fill="#7cb843" />
    <path d="M36 126C52 124 64 116 68 98C72 92 88 90 91 100C90 120 74 142 52 144C44 142 36 136 36 126Z" fill="#3340a0" />
    <path d="M66 108C64 96 76 91 84 95C92 100 91 110 84 116C76 118 70 116 66 108Z" fill="#1f86cf" />
    <path d="M88 97L122 107L88 105Z" fill="#6d5a70" />
    <path d="M36 126L54 142C46 152 38 146 30 162L24 166L10 175C12 154 18 134 36 126Z" fill="#a3237f" />
    <path d="M36 126L54 142C44 146 34 140 26 148C26 138 30 130 36 126Z" fill="#6b2a8c" />
    <text x="73" y="167" textLength="93" lengthAdjust="spacingAndGlyphs" fontFamily="Open Sans, sans-serif" fontWeight="700" fontSize="43" fill="#fff">SCW</text>
  </svg>
);

export default function App() {
  return (
    <div className="h-[893px] w-[1592px] overflow-hidden bg-[#e6e6e6] font-['Liberation_Sans',Arial,sans-serif]">
      <header className="flex h-[72px] items-start bg-[#005eb8] text-white">
        <ScwLogo />
        <div className="ml-[56px] flex w-[157px] shrink-0 flex-col items-center whitespace-nowrap">
          <span className="mt-[10px] text-[25.2px] leading-7">24 April 2024</span>
          <span className="mt-[9px] text-[13.5px] leading-4 [-webkit-text-stroke:0.3px_white]">Latest Refresh Date</span>
        </div>
        <h1 className="ml-[415px] w-[202px] shrink-0 pt-[11px] text-center text-[40.5px] leading-[46px] font-bold">Scorecard</h1>
        <div className="ml-[473px] flex w-[80px] shrink-0 flex-col items-center">
          <svg viewBox="0 0 34 25" className="mt-[15px] mr-[3px] h-[25px] w-[34px]" fill="none" stroke="#fff" strokeWidth="1.300">
            <path d="M0.700 0.700H33.300V24.300H0.700ZM0.700 0.700L14 13.500L17 16.300L20 13.500L33.300 0.700M0.700 24.300L13 12.600M33.300 24.300L21 12.600" />
          </svg>
          <span className="mt-[7px] text-[13.500px] leading-4 [-webkit-text-stroke:0.3px_white]">Feedback</span>
        </div>
        <svg viewBox="0 -16 104 72" className="ml-[45px] h-[72px] w-[104px] shrink-0 overflow-visible">
          <text x="1" y="35.500" textLength="90" lengthAdjust="spacingAndGlyphs" fontFamily="Open Sans, sans-serif" fontWeight="800" fontStyle="italic" fontSize="46" fill="#fff" stroke="#fff" strokeWidth="1.400">NHS</text>
        </svg>
      </header>
      <main className="flex pt-[27px]">
        {panels.map((p) => (
          <Panel key={p.title} {...p} />
        ))}
      </main>
    </div>
  );
}
